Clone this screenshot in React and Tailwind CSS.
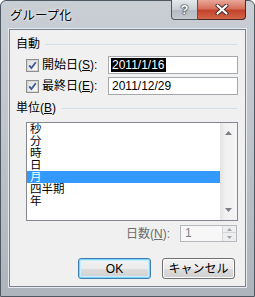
export default function App() {
  const font = { fontFamily: '"Liberation Sans", "Noto Sans CJK JP", sans-serif' };
  const Check = () => (
    <svg width="13" height="13" viewBox="0 0 13 13" className="shrink-0">
      <rect x="0.5" y="0.5" width="12" height="12" fill="#f4f4f4" stroke="#8e8f8f" />
      <rect x="1.5" y="1.5" width="10" height="10" fill="url(#cbg)" stroke="#d6d6d6" />
      <defs>
        <linearGradient id="cbg" x1="0" y1="0" x2="1" y2="1">
          <stop offset="0" stopColor="#dcdcdc" />
          <stop offset="1" stopColor="#ffffff" />
        </linearGradient>
      </defs>
      <path d="M3.2 6.4 L5.4 9 L9.8 3.2" fill="none" stroke="#3d5a96" strokeWidth="1.8" />
    </svg>
  );
  const items = ["秒", "分", "時", "日", "月", "四半期", "年"];
  return (
    <div className="w-[255px] h-[297px] bg-white text-[12px] text-black" style={font}>
      <div className="w-full h-full rounded-t-[6px] border border-[#4e5862] bg-[linear-gradient(180deg,#c8ced4_0%,#c0c6cc_40%,#adb4bb_100%)] flex flex-col">
        {/* title bar */}
        <div className="h-[28px] flex items-start">
          <div className="pl-[9px] pt-[8px] leading-[14px] text-[12.5px] [text-shadow:0_0_4px_#ffffff,0_0_2px_#ffffff]">グループ化</div>
          <div className="ml-auto mr-[8px] flex -mt-px">
            <div className="w-[27px] h-[20px] rounded-bl-[4px] border border-[#4c5560] border-t-0 bg-[linear-gradient(180deg,#e4e8ec_0%,#c8ced4_50%,#b3bac1_51%,#c3c9cf_100%)] flex items-center justify-center">
              <span className="text-white font-bold text-[13px] leading-none [text-shadow:0_0_1px_#1f2a35,0_0_1px_#1f2a35,0_0_2px_#1f2a35]">?</span>
            </div>
            <div className="w-[48px] h-[20px] rounded-br-[4px] border border-[#4a2a24] border-t-0 border-l-0 bg-[linear-gradient(180deg,#e9a898_0%,#d7705c_45%,#c4432b_55%,#d2654a_100%)] flex items-center justify-center">
              <svg width="14" height="11" viewBox="0 0 14 11">
                <path d="M2.5 1.5 L11.5 9.5 M11.5 1.5 L2.5 9.5" stroke="#3a2a2a" strokeWidth="4" strokeLinecap="round" />
                <path d="M2.5 1.5 L11.5 9.5 M11.5 1.5 L2.5 9.5" stroke="#ffffff" strokeWidth="2.2" strokeLinecap="round" />
              </svg>
            </div>
          </div>
        </div>
        {/* client */}
        <div className="mx-[8px] h-[258px] border border-[#7b848d] shadow-[0_0_0_1px_#e6eaee] bg-[#f0f0f0] flex flex-col">
          <div className="mt-[7px] h-[14px] flex items-center pl-[6px] pr-[8px]">
            <span className="leading-[14px]">自動</span>
            <div className="flex-1 ml-[5px] h-px bg-[#d5dfe5]" />
          </div>
          <div className="mt-[5px] h-[18px] flex items-center pl-[16px]">
            <Check />
            <span className="ml-[3px] w-[66px] leading-[14px]">開始日(<span className="underline">S</span>):</span>
            <div className="w-[130px] h-[18px] border border-[#a5a9ae] bg-white flex items-center pl-[2px]">
              <span className="bg-black text-white leading-[14px] px-px">2011/1/16</span>
            </div>
          </div>
          <div className="mt-[3px] h-[18px] flex items-center pl-[16px]">
            <Check />
            <span className="ml-[3px] w-[66px] leading-[14px]">最終日(<span className="underline">E</span>):</span>
            <div className="w-[130px] h-[18px] border border-[#a5a9ae] bg-white flex items-center pl-[3px]">
              <span className="leading-[14px]">2011/12/29</span>
            </div>
          </div>
          <div className="mt-[6px] h-[14px] flex items-center pl-[6px] pr-[8px]">
            <span className="leading-[14px]">単位(<span className="underline">B</span>)</span>
            <div className="flex-1 ml-[6px] h-px bg-[#d5dfe5]" />
          </div>
          <div className="mt-[7px] ml-[16px] w-[212px] h-[99px] border border-[#828790] bg-white flex">
            <div className="flex-1 flex flex-col">
              {items.map((t) => (
                <div key={t} className={"h-[12px] leading-[12px] text-[11.5px] pl-[3px] overflow-hidden " + (t === "月" ? "bg-[#3399ff] text-white" : "")}>{t}</div>
              ))}
            </div>
            <div className="w-[17px] bg-[linear-gradient(90deg,#e3e3e3_0%,#f1f1f1_30%,#f4f4f4_100%)] flex flex-col items-center justify-between py-[8px]">
              <svg width="7" height="4" viewBox="0 0 7 4"><path d="M0 4 L3.5 0 L7 4 Z" fill="#7a7f85" /></svg>
              <svg width="7" height="4" viewBox="0 0 7 4"><path d="M0 0 L3.5 4 L7 0 Z" fill="#7a7f85" /></svg>
            </div>
          </div>
          <div className="mt-[4px] h-[17px] flex items-center justify-end pr-[8px]">
            <span className="text-[#6d6d6d] mr-[10px] leading-[14px]">日数(<span className="underline">N</span>):</span>
            <div className="w-[57px] h-[17px] border border-[#b5b9bd] bg-[#f7f7f7] flex">
              <div className="flex-1 pl-[4px] text-[#808080] leading-[15px]">1</div>
              <div className="w-[14px] flex flex-col border-l border-[#d4d6d8]">
                <div className="h-[7px] flex items-center justify-center bg-[#eeeeee] border-b border-[#d4d6d8]">
                  <svg width="5" height="3" viewBox="0 0 5 3"><path d="M0 3 L2.5 0 L5 3 Z" fill="#a0a4a8" /></svg>
                </div>
                <div className="flex-1 flex items-center justify-center bg-[#eeeeee]">
                  <svg width="5" height="3" viewBox="0 0 5 3"><path d="M0 0 L2.5 3 L5 0 Z" fill="#a0a4a8" /></svg>
                </div>
              </div>
            </div>
          </div>
          <div className="mt-[16px] flex justify-end gap-[11px] pr-[10px]">
            <div className="w-[73px] h-[21px] rounded-[3px] border border-[#3c7fb1] shadow-[inset_0_0_0_1px_#7fd3f9,inset_0_0_0_2px_#c9eefc] bg-[linear-gradient(180deg,#f2f2f2_0%,#ebebeb_50%,#dddddd_51%,#cfcfcf_100%)] flex items-center justify-center leading-[14px]">OK</div>
            <div className="w-[73px] h-[21px] rounded-[3px] border border-[#707070] shadow-[inset_0_0_0_1px_#fbfbfb] bg-[linear-gradient(180deg,#f2f2f2_0%,#ebebeb_50%,#dddddd_51%,#cfcfcf_100%)] flex items-center justify-center leading-[14px]">キャンセル</div>
          </div>
        </div>
      </div>
    </div>
  );
}
